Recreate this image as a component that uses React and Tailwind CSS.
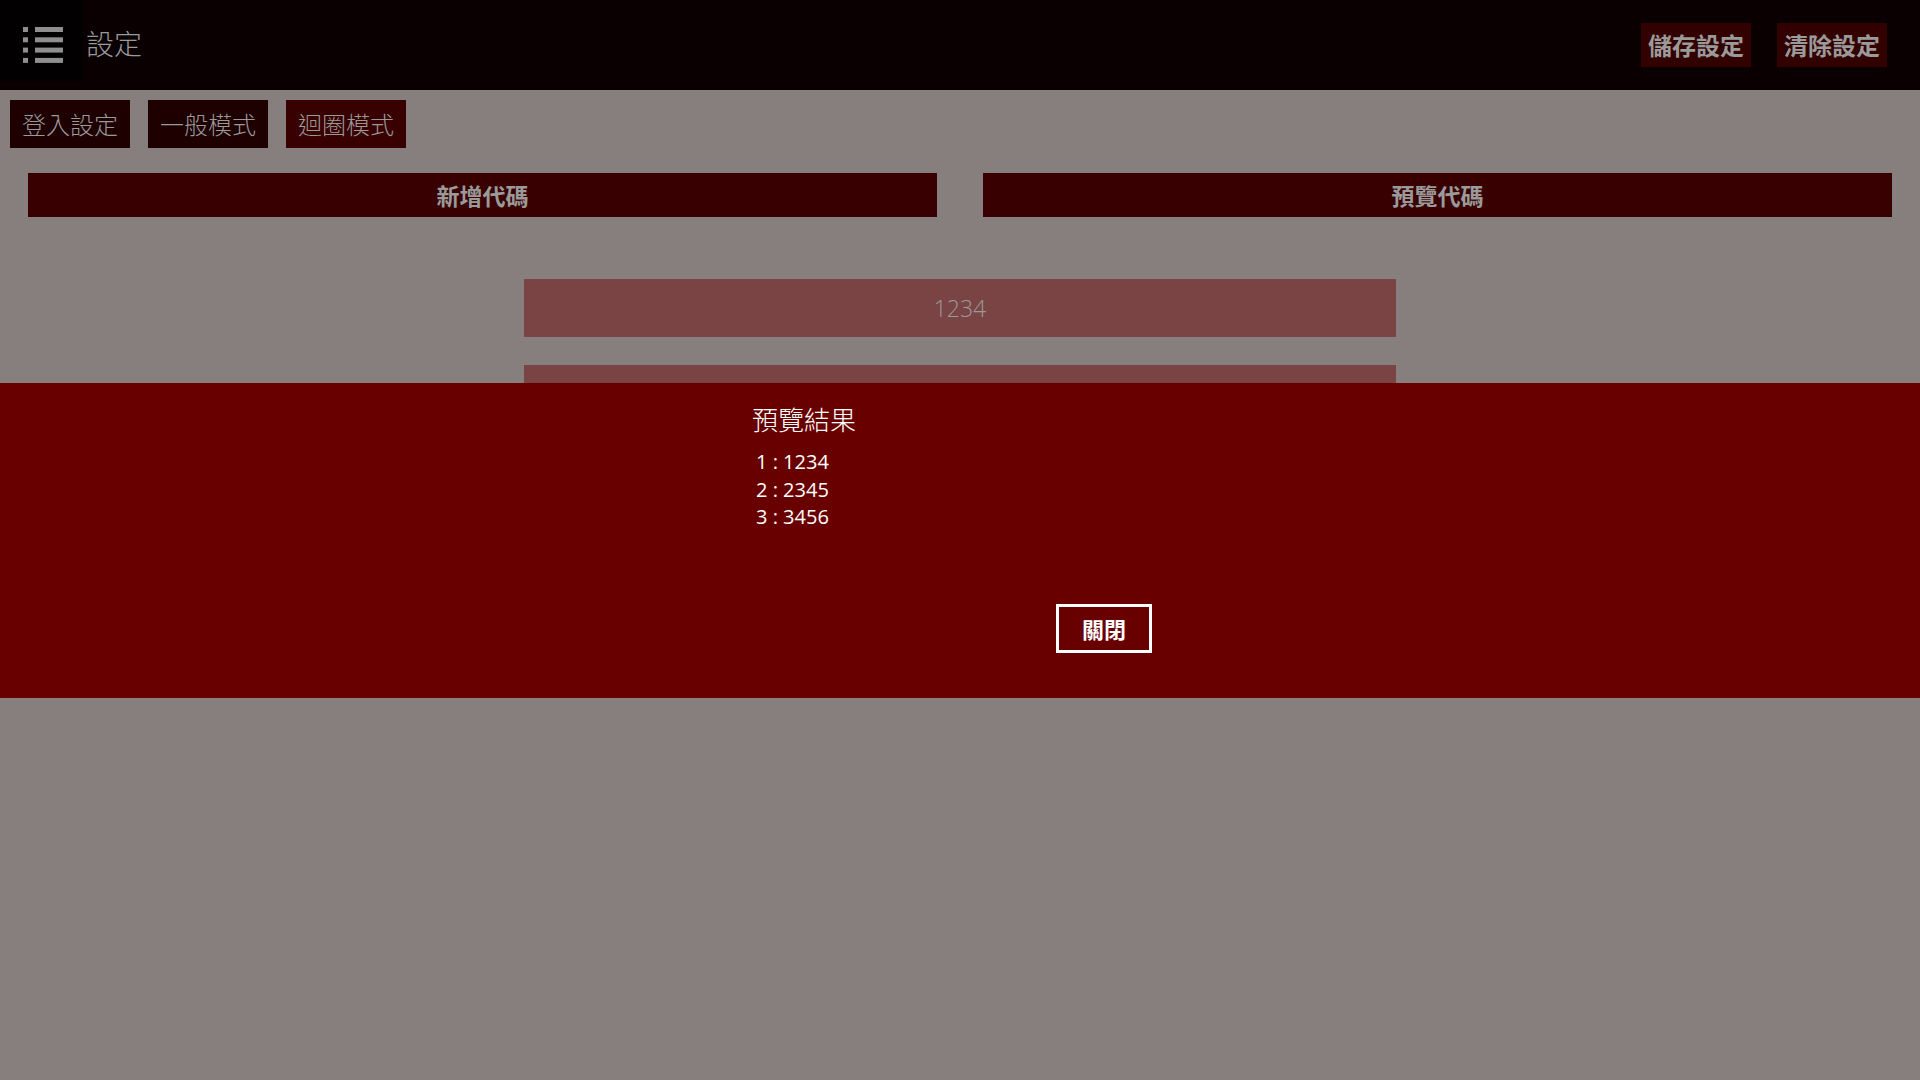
import React from "react";

const cjk = { fontFamily: '"Noto Sans CJK TC", "Noto Sans", sans-serif' };
const ui = { fontFamily: '"Open Sans", "Noto Sans CJK TC", sans-serif' };

function MenuIcon() {
  return (
    <svg width="40" height="36" viewBox="0 0 40 36">
      {[0, 1, 2, 3].map((i) => (
        <g key={i} fill="#8f8f8f">
          <rect x="0" y={i * 10.3} width="5" height="5" />
          <rect x="12" y={i * 10.3} width="28" height="5" />
        </g>
      ))}
    </svg>
  );
}

export default function App() {
  return (
    <div className="relative w-[1920px] h-[1080px] bg-[#877e7e] overflow-hidden" style={cjk}>
      {/* Header */}
      <div className="h-[90px] bg-[#0a0002] flex items-start">
        <div className="w-[83px] h-[82px] bg-[#020000] flex items-start justify-center pl-[2px] pt-[27px]">
          <MenuIcon />
        </div>
        <div className="ml-[3px] h-[82px] flex items-center text-[28px] text-[#9a9a9a] leading-none font-light pt-[4px]">設定</div>
        <div className="ml-auto flex gap-[26px] mt-[23px] mr-[33px]">
          <button className="w-[110px] h-[44px] bg-[#330000] text-[#9a9a9a] text-[24px] font-bold leading-none flex items-center justify-center">儲存設定</button>
          <button className="w-[110px] h-[44px] bg-[#330000] text-[#9a9a9a] text-[24px] font-bold leading-none flex items-center justify-center">清除設定</button>
        </div>
      </div>

      {/* Tabs */}
      <div className="flex gap-[18px] pl-[10px] pt-[10px]">
        <button className="w-[120px] h-[48px] bg-[#1e0000] text-[#9a9a9a] text-[24px] font-light leading-none flex items-center justify-center">登入設定</button>
        <button className="w-[120px] h-[48px] bg-[#1e0000] text-[#9a9a9a] text-[24px] font-light leading-none flex items-center justify-center">一般模式</button>
        <button className="w-[120px] h-[48px] bg-[#380000] text-[#9a9a9a] text-[24px] font-light leading-none flex items-center justify-center">迴圈模式</button>
      </div>

      {/* Section buttons */}
      <div className="grid grid-cols-2 gap-[46px] px-[28px] mt-[25px]">
        <button className="h-[44px] bg-[#380000] text-[#9a9a9a] text-[23px] font-bold leading-none flex items-center justify-center">新增代碼</button>
        <button className="h-[44px] bg-[#380000] text-[#9a9a9a] text-[23px] font-bold leading-none flex items-center justify-center">預覽代碼</button>
      </div>

      {/* Inputs */}
      <div className="flex flex-col items-center gap-[28px] mt-[62px]">
        <div className="w-[872px] h-[58px] bg-[#7a4444] flex items-center justify-center text-[23px] text-[#9a9a9a] font-light" style={ui}>1234</div>
        <div className="w-[872px] h-[58px] bg-[#7a4444] flex items-center justify-center text-[23px] text-[#9a9a9a] font-light" style={ui}>2345</div>
        <div className="w-[872px] h-[58px] bg-[#7a4444] flex items-center justify-center text-[23px] text-[#9a9a9a] font-light" style={ui}>3456</div>
      </div>

      {/* Dialog */}
      <div className="absolute left-0 right-0 top-[383px] h-[315px] bg-[#680000]">
        <div className="w-[416px] mx-auto pt-[20px] flex flex-col">
          <div className="text-[26px] leading-[32px] text-white font-light" style={cjk}>預覽結果</div>
          <div className="mt-[13px] ml-[4px] text-[20px] leading-[27.5px] text-white" style={ui}>
            <div>1 : 1234</div>
            <div>2 : 2345</div>
            <div>3 : 3456</div>
          </div>
          <div className="flex justify-end mr-[16px] mt-[73px]">
            <button className="w-[96px] h-[49px] border-[3px] border-white text-white text-[22px] font-bold leading-none flex items-center justify-center" style={cjk}>關閉</button>
          </div>
        </div>
      </div>
    </div>
  );
}
